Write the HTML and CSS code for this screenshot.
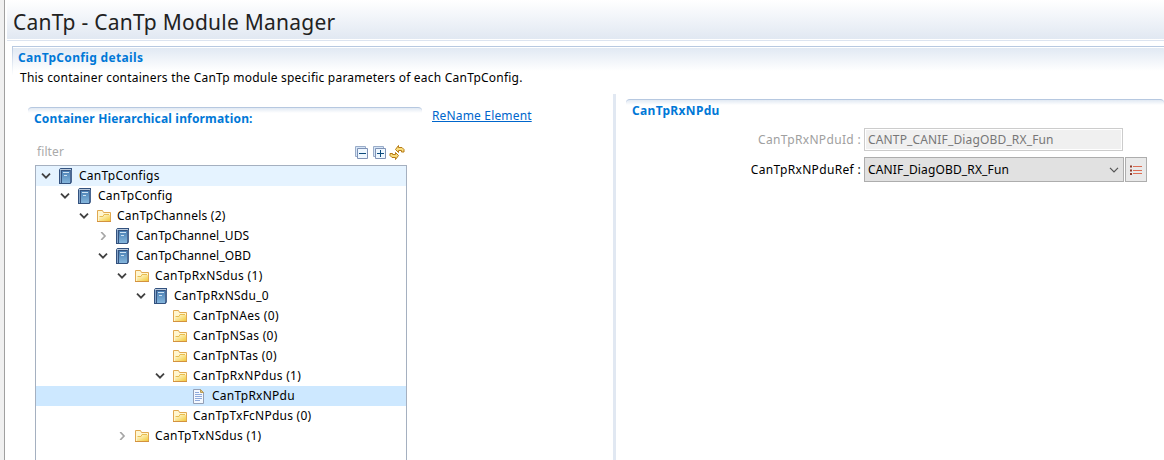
FILE: index.html
```html
<!DOCTYPE html>
<html lang="en">
<head>
<meta charset="utf-8">
<title>CanTp - CanTp Module Manager</title>
<link rel="stylesheet" href="styles.css">
</head>
<body>
<svg class="defs" aria-hidden="true">
  <defs>
    <linearGradient id="gBook" x1="0" y1="0" x2="0" y2="1"><stop offset="0" stop-color="#4a7fb4"/><stop offset="1" stop-color="#84b6dc"/></linearGradient>
    <linearGradient id="gFold" x1="0" y1="0" x2="1" y2="1"><stop offset="0" stop-color="#fffbe0"/><stop offset="1" stop-color="#f3cb3c"/></linearGradient>
  </defs>
  <symbol id="book" viewBox="0 0 16 16">
    <path d="M2 1.500 3.500 0H15v14l-1.500 2H2z" fill="#33527f"/>
    <path d="M3 1h11v1H3z" fill="#bccbdd"/>
    <path d="M3 2h1v13H3z" fill="#88a7ca"/>
    <path d="M5 3h8v12H5z" fill="url(#gBook)"/>
    <path d="M14 2v12" stroke="#7894b7" fill="none" stroke-width=".7"/>
    <path d="M6 4.500h6M7 7.500h3" stroke="#cfe2f2" fill="none"/>
  </symbol>
  <symbol id="folder" viewBox="0 0 16 16">
    <path d="M2.500 13.500v-11h5l1 2h7v9z" fill="#fff6cf" stroke="#e0a850"/>
    <path d="M4 13V9h4l1-2h6v6z" fill="url(#gFold)"/>
    <path d="M4.500 8.500H8l1-2h5" stroke="#e8bd50" fill="none"/>
    <path d="M2 13.500h14" stroke="#d3923f"/>
  </symbol>
  <symbol id="doc" viewBox="0 0 16 16">
    <path d="M3.500 1.500h7l3 3v11h-10z" fill="#f5f9ff" stroke="#949fb5"/>
    <path d="M10.500 1.500v3h3z" fill="#e3c777" stroke="#b99b58"/>
    <path d="M5 4.500h4M5 6.500h7M5 8.500h7M5 10.500h7M5 12.500h5" stroke="#8faadb"/>
  </symbol>
  <symbol id="open" viewBox="0 0 10 8"><path d="M1 1.700 5 5.700 9 1.700" fill="none" stroke="#404040" stroke-width="1.800"/></symbol>
  <symbol id="closed" viewBox="0 0 10 8"><path d="M3.200 0 7 4 3.200 8" fill="none" stroke="#a6a6a6" stroke-width="1.700"/></symbol>
  <symbol id="boxes" viewBox="0 0 14 14">
    <path d="M.5.500h10v10H.5z" fill="#d6e6f7" stroke="#9aacc8"/>
    <path d="M2.500 2.500h10v10h-10z" fill="#eef7ff" stroke="#7f92b6"/>
  </symbol>
</svg>
<div class="app">
  <div class="gutter"></div>
  <main class="main">
    <header class="header"><h1 class="title">CanTp - CanTp Module Manager</h1></header>
    <div class="section section-main">
      <h2 class="heading heading-main">CanTpConfig details</h2>
      <p class="desc">This container containers the CanTp module specific parameters of each CanTpConfig.</p>
    </div>
    <div class="columns">
      <section class="left">
        <div class="section section-tree"><h2 class="heading heading-tree">Container Hierarchical information:</h2></div>
        <div class="toolbar">
          <span class="filter">filter</span>
          <svg class="tool" viewBox="0 0 14 14"><use href="#boxes"/><path d="M4 7.500h7" stroke="#0b4a7c"/></svg>
          <svg class="tool" viewBox="0 0 14 14"><use href="#boxes"/><path d="M4 7.500h7M7.500 4v7" stroke="#0b4a7c"/></svg>
          <svg class="refresh" viewBox="0 0 16 16"><g fill="#f9dc7c" stroke="#b67b17" stroke-linejoin="round"><path d="M6.500 5.500 9.500 1.500v2h3.500l2 2v2.500h-2.500V6.500h-3v2z"/><path d="M9.500 11.500 6.500 15.500v-2H3l-2-2V9.500h2.500v1h3v-2z"/></g></svg>
        </div>
        <div class="tree">
          <div class="row hover d0"><svg class="arrow"><use href="#open"/></svg><svg class="icon"><use href="#book"/></svg><span>CanTpConfigs</span></div>
          <div class="row d1"><svg class="arrow"><use href="#open"/></svg><svg class="icon"><use href="#book"/></svg><span>CanTpConfig</span></div>
          <div class="row d2"><svg class="arrow"><use href="#open"/></svg><svg class="icon"><use href="#folder"/></svg><span>CanTpChannels (2)</span></div>
          <div class="row tight d3"><svg class="arrow"><use href="#closed"/></svg><svg class="icon"><use href="#book"/></svg><span>CanTpChannel_UDS</span></div>
          <div class="row tight d3"><svg class="arrow"><use href="#open"/></svg><svg class="icon"><use href="#book"/></svg><span>CanTpChannel_OBD</span></div>
          <div class="row wide d4"><svg class="arrow"><use href="#open"/></svg><svg class="icon"><use href="#folder"/></svg><span>CanTpRxNSdus (1)</span></div>
          <div class="row d5"><svg class="arrow"><use href="#open"/></svg><svg class="icon"><use href="#book"/></svg><span>CanTpRxNSdu_0</span></div>
          <div class="row wide d6"><svg class="arrow"></svg><svg class="icon"><use href="#folder"/></svg><span>CanTpNAes (0)</span></div>
          <div class="row wide d6"><svg class="arrow"></svg><svg class="icon"><use href="#folder"/></svg><span>CanTpNSas (0)</span></div>
          <div class="row wide d6"><svg class="arrow"></svg><svg class="icon"><use href="#folder"/></svg><span>CanTpNTas (0)</span></div>
          <div class="row wide d6"><svg class="arrow"><use href="#open"/></svg><svg class="icon"><use href="#folder"/></svg><span>CanTpRxNPdus (1)</span></div>
          <div class="row selected d7"><svg class="arrow"></svg><svg class="icon"><use href="#doc"/></svg><span>CanTpRxNPdu</span></div>
          <div class="row d6"><svg class="arrow"></svg><svg class="icon"><use href="#folder"/></svg><span>CanTpTxFcNPdus (0)</span></div>
          <div class="row wide d4"><svg class="arrow"><use href="#closed"/></svg><svg class="icon"><use href="#folder"/></svg><span>CanTpTxNSdus (1)</span></div>
        </div>
      </section>
      <div class="middle"><a class="rename">ReName Element</a></div>
      <div class="sash"></div>
      <section class="right">
        <div class="section section-detail"><h2 class="heading heading-detail">CanTpRxNPdu</h2></div>
        <div class="field field-id">
          <label class="label disabled">CanTpRxNPduId :</label>
          <div class="input"><span class="value">CANTP_CANIF_DiagOBD_RX_Fun</span></div>
        </div>
        <div class="field">
          <label class="label">CanTpRxNPduRef :</label>
          <div class="combo"><span class="value">CANIF_DiagOBD_RX_Fun</span><svg class="caret" viewBox="0 0 10 8"><path d="M1 1.800 5 5.800 9 1.800" fill="none" stroke="#555" stroke-width="1.200"/></svg></div>
          <div class="listbtn"><svg viewBox="0 0 12 10"><path d="M0 1.500h2M0 5.500h2M0 9h2" stroke="#8c3a2b" stroke-width="2"/><path d="M3 1.500h9M3 5.500h9M3 8.500h9" stroke="#dc6d54"/></svg></div>
        </div>
      </section>
    </div>
  </main>
</div>
</body>
</html>
```
FILE: styles.css
```css
* { box-sizing: border-box; }
body { margin: 0; background: #fff; color: #000; font: 12px/20px "Noto Sans", "Open Sans", sans-serif; overflow: hidden; }
h1, h2, p { margin: 0; white-space: nowrap; }
.defs { position: absolute; width: 0; height: 0; }
.app { display: flex; height: 460px; }
.gutter { width: 5px; background: #f0f0f0; border-right: 1px solid #a0a0a0; }
.main { flex: 1; min-width: 0; padding-left: 2px; display: flex; flex-direction: column; }
.header { height: 41px; flex: none; padding: 7px 0 0 6px; border-bottom: 1px solid #dce4f0; background: linear-gradient(#fff, #e1e8f2) 0 0 / 100% 39px no-repeat; }
.title { font-size: 21px; line-height: 30px; font-weight: 400; color: #222; letter-spacing: .24px; }
.section { border-top: 1px solid #b6c8e0; border-radius: 4px 4px 0 0; }
.section-main { height: 48px; flex: none; margin: 5px 0 0 5px; padding-top: 1px; background: linear-gradient(#e1e9f3, #fff) 0 1px / 100% 23px no-repeat; border-left: 1px solid #e3eaf4; border-image: linear-gradient(#b6c8e0, #fff 60%) 1; }
.heading { font-size: 12px; line-height: 20px; font-weight: 700; color: #0078d7; letter-spacing: .34px; }
.heading-main { padding-left: 5px; }
.desc { padding-left: 7px; letter-spacing: .217px; }
.columns { flex: 1; display: flex; min-height: 0; }
.left { width: 394px; margin-left: 21px; padding-top: 13px; display: flex; flex-direction: column; }
.section-tree { height: 37px; padding-top: 1px; background: linear-gradient(#e1e9f3, #fff) 0 0 / 100% 5px no-repeat; }
.heading-tree { padding-left: 6px; letter-spacing: .17px; }
.toolbar { display: flex; align-items: flex-start; height: 21px; padding-left: 9px; }
.filter { color: #aaa; flex: 1; line-height: 16px; letter-spacing: .1px; }
.tool { width: 14px; height: 14px; margin: 2px 4px 0 0; }
.refresh { width: 16px; height: 16px; margin: 0 17px 0 -2px; }
.tree { width: 372px; margin-left: 7px; flex: 1; border: 1px solid #a5b0c0; border-bottom: 0; }
.row { display: flex; align-items: center; height: 20px; white-space: nowrap; letter-spacing: .24px; }
.tight { letter-spacing: .14px; }
.wide { letter-spacing: .32px; }
.arrow { width: 10px; height: 8px; margin: 0 6px 0 5px; }
.icon { width: 16px; height: 16px; margin-right: 6px; }
.hover { background: #e5f3ff; }
.selected { background: #cde8ff; }
.d1 { padding-left: 19px; }
.d2 { padding-left: 38px; }
.d3 { padding-left: 57px; }
.d4 { padding-left: 76px; }
.d5 { padding-left: 95px; }
.d6 { padding-left: 114px; }
.d7 { padding-left: 133px; }
.middle { width: 191px; padding: 12px 0 0 10px; }
.rename { color: #0066cc; text-decoration: underline; white-space: nowrap; letter-spacing: .16px; }
.sash { width: 3px; background: #e1e8f2; }
.right { flex: 1; padding: 5px 0 0 10px; }
.section-detail { height: 29px; background: linear-gradient(#e1e9f3, #fff) 0 0 / 100% 5px no-repeat; }
.heading-detail { padding-left: 6px; line-height: 22px; }
.field { display: flex; align-items: center; height: 25px; }
.field-id { height: 23px; margin-bottom: 6px; }
.label { width: 235px; text-align: right; margin-right: 3px; white-space: nowrap; letter-spacing: .33px; }
.disabled { color: #a0a0a0; }
.value { letter-spacing: .15px; }
.input { width: 259px; height: 23px; padding-left: 3px; line-height: 21px; border: 1px solid #ccc; background: #f0f0f0; box-shadow: inset 0 0 0 1px #fff; color: #777; }
.combo { width: 260px; height: 25px; display: flex; align-items: center; justify-content: space-between; padding: 0 4px 0 3px; border: 1px solid #adadad; background: #e1e1e1; }
.caret { width: 10px; height: 8px; }
.listbtn { width: 22px; height: 25px; margin-left: 1px; display: flex; align-items: center; justify-content: center; border: 1px solid #adadad; background: #e9e9e9; }
.listbtn svg { width: 12px; height: 10px; }
```
